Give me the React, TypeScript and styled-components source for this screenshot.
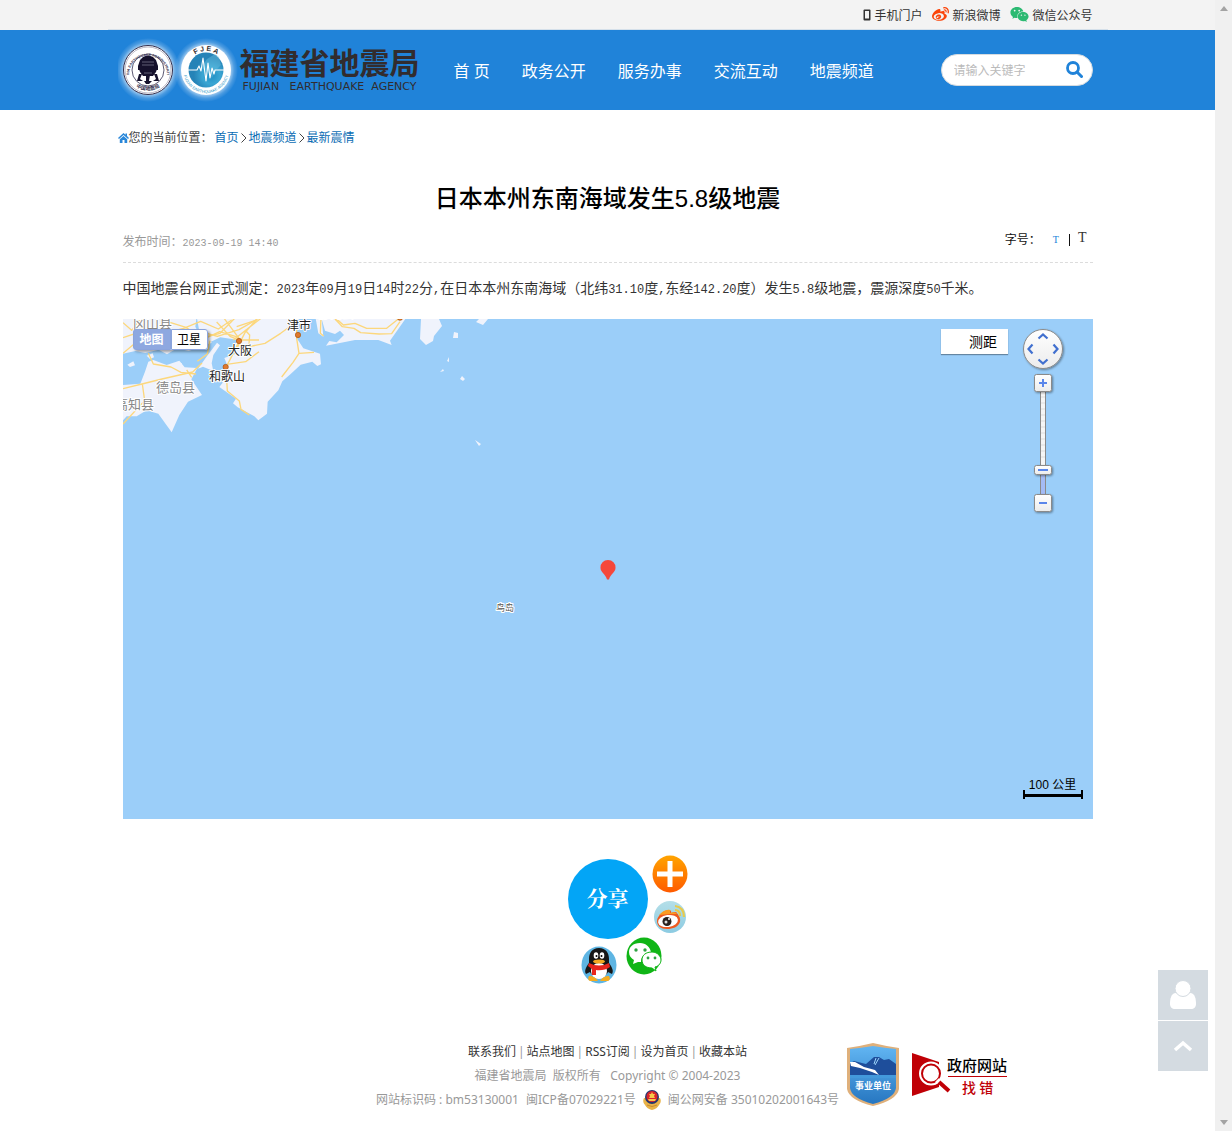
import React from 'react';
import styled, { createGlobalStyle } from 'styled-components';
import { FaWeibo, FaWeixin } from 'react-icons/fa';

const yahei = '"Noto Sans", "Noto Sans CJK SC", sans-serif';
const song = '"Liberation Sans", "Noto Sans CJK SC", sans-serif';
const blue = '#2083d9';

const GlobalStyle = createGlobalStyle`
  * { box-sizing: border-box; }
  body { margin: 0; background: #fff; color: #333; font: 12px/24px ${song}; }
  a { color: inherit; text-decoration: none; }
  button { padding: 0; border: 0; background: none; color: inherit; font: inherit; cursor: pointer; }
  h1, p { margin: 0; }
  svg { display: block; }
`;

const Window = styled.div`
  display: grid;
  grid-template-columns: minmax(0, 1fr) 17px;
  min-height: 100vh;
`;
const Rail = styled.div`
  display: flex;
  flex-direction: column;
  justify-content: space-between;
  align-items: center;
  padding: 6px 0;
  background: #f0f0f0;
`;
const Container = styled.div`
  max-width: 1000px;
  margin: 0 auto;
`;

const TopBar = styled.div`
  background: #f3f3f3;
`;
const TopLinks = styled(Container)`
  display: flex;
  justify-content: flex-end;
  gap: 10px;
  height: 30px;
  padding: 2px 15px 0;
  border-bottom: 1px solid #d5e0ea;
  font-family: ${yahei};
`;
const TopLink = styled.a`
  display: flex;
  align-items: center;
  gap: 3px;
  svg { margin-bottom: 2px; }
`;

const Header = styled.header`
  background: ${blue};
`;
const HeaderInner = styled(Container)`
  display: flex;
  align-items: center;
  height: 80px;
  padding: 0 15px 0 10px;
`;
const Logo = styled.a`
  display: flex;
  align-items: center;
  color: #322c2e;
`;
const LogoName = styled.span`
  display: block;
  margin-bottom: 2px;
  font: 700 30px/32px "Noto Sans CJK SC", sans-serif;
`;
const LogoLatin = styled.span`
  display: block;
  padding-left: 3px;
  font: 11px/16px "DejaVu Sans", sans-serif;
  white-space: pre;
`;
const Nav = styled.nav`
  display: flex;
  margin-left: 18px;
  padding-top: 2px;
  font: 400 16px/24px "Open Sans", "Noto Sans CJK SC", sans-serif;
  color: #fff;
  a { padding: 0 16px; white-space: nowrap; }
`;
const Search = styled.form`
  display: flex;
  align-items: center;
  width: 152px;
  height: 32px;
  margin-left: auto;
  padding: 0 9px 0 12px;
  border: 1px solid #d5dbe0;
  border-radius: 16px;
  background: #fff;
`;
const SearchInput = styled.input`
  flex: 1;
  min-width: 0;
  padding: 2px 0 0;
  border: 0;
  outline: 0;
  background: none;
  font: 12px/20px ${song};
  &::placeholder { color: #bbb; opacity: 1; }
`;

const Breadcrumb = styled.nav`
  display: flex;
  align-items: center;
  height: 54px;
  padding: 2px 0 0 10px;
  color: #444;
  a { color: #0a6cb4; }
`;
const Here = styled.span`
  margin-right: 2px;
`;
const Crumb = styled.span`
  display: flex;
  align-items: center;
`;
const Chevron = styled.svg`
  margin: 0 2px;
`;

const Article = styled.article`
  padding: 16px 15px 0;
`;
const Title = styled.h1`
  padding-top: 2px;
  text-align: center;
  font: 500 24px/34px "Liberation Sans", "Noto Sans CJK SC", sans-serif;
  color: #000;
`;
const Meta = styled.div`
  display: flex;
  justify-content: space-between;
  align-items: center;
  height: 33px;
  margin-top: 14px;
  padding-bottom: 6px;
  border-bottom: 1px dashed #dcdcdc;
  color: #999;
`;
const Stamp = styled.time`
  font: 10px/24px "Liberation Mono", monospace;
`;
const SizePicker = styled.div`
  display: flex;
  align-items: center;
  align-self: flex-start;
  height: 20px;
  padding-right: 6px;
  color: #111;
`;
const SizeButton = styled.button<{ $large?: boolean; $active?: boolean }>`
  margin: ${p => (p.$large ? '0 0 4px 8px' : '0 10px 0 12px')};
  color: ${p => (p.$active ? blue : '#333')};
  font: ${p => (p.$large ? '14px' : '10px')}/16px "Liberation Serif", serif;
`;
const Divider = styled.span`
  width: 1px;
  height: 12px;
  background: #111;
`;
const Body = styled.p`
  margin-top: 11px;
  font-size: 14px;
  line-height: 28px;
`;
const Num = styled.span`
  font: 12px/24px "Liberation Mono", monospace;
`;

const MapBox = styled.section`
  position: relative;
  height: 500px;
  margin-top: 17px;
  overflow: hidden;
  background: #9bcef9;
  color: #000;
`;
const MapArt = styled.svg`
  width: 100%;
  height: 100%;
`;
const MapTypes = styled.div`
  position: absolute;
  top: 10px;
  left: 10px;
  display: flex;
  border-radius: 3px;
  box-shadow: 2px 2px 3px rgba(0, 0, 0, 0.35);
`;
const MapType = styled.button<{ $active?: boolean }>`
  width: ${p => (p.$active ? 38 : 37)}px;
  height: 21px;
  border: 1px solid #8ba4dc;
  border-radius: ${p => (p.$active ? '3px 0 0 3px' : '0 3px 3px 0')};
  background: ${p => (p.$active ? '#8ea8e0' : '#fff')};
  color: ${p => (p.$active ? '#fff' : '#000')};
  font: ${p => (p.$active ? 700 : 400)} 12px/18px ${song};
`;
const Measure = styled.button`
  position: absolute;
  top: 10px;
  right: 85px;
  width: 67px;
  height: 25px;
  padding: 0 10px 0 28px;
  background: #fff;
  box-shadow: 0 1px 1px rgba(0, 0, 0, 0.35);
  font: 14px/24px ${song};
  white-space: nowrap;
`;
const Controls = styled.div`
  position: absolute;
  top: 8px;
  right: 27px;
`;
const Pin = styled.svg`
  position: absolute;
  top: 50%;
  left: 50%;
  margin: -9px 0 0 -8px;
`;
const Scale = styled.div`
  position: absolute;
  right: 10px;
  bottom: 20px;
  width: 60px;
  text-align: center;
  line-height: 14px;
`;
const ScaleBar = styled.div`
  height: 9px;
  margin-top: -2px;
  border: solid #000;
  border-width: 0 2px;
  background: linear-gradient(#000, #000) 0 4px / 100% 3px no-repeat;
`;

const ShareMenu = styled.div`
  position: relative;
  width: 80px;
  height: 130px;
  margin: 40px auto 51px;
`;
const ShareMain = styled.button`
  width: 80px;
  height: 80px;
  border-radius: 50%;
  background: #03a5f6;
  color: #fff;
  font: 700 21px/80px "Liberation Serif", "Noto Serif CJK SC", "Noto Sans CJK SC", serif;
`;
const ShareItem = styled.button<{ $x: number; $y: number }>`
  position: absolute;
  left: ${p => p.$x}px;
  top: ${p => p.$y}px;
`;

const Footer = styled.footer`
  display: grid;
  grid-template-columns: minmax(0, 1fr) auto minmax(0, 1fr);
  padding-bottom: 19px;
  font-family: ${yahei};
  color: #999;
`;
const FooterText = styled.div`
  grid-column: 2;
  text-align: center;
`;
const FooterLine = styled.div`
  display: flex;
  justify-content: center;
  align-items: center;
  height: 24px;
  gap: 2px;
  white-space: pre;
  a { color: #333; }
`;
const Record = styled(FooterLine)`
  gap: 7px;
  a { color: inherit; }
`;
const Badges = styled.div`
  display: flex;
  align-items: flex-start;
  gap: 12px;
  padding: 3px 0 0 8px;
`;
const FloatBar = styled.div`
  position: fixed;
  right: 24px;
  bottom: 60px;
  display: grid;
  gap: 1px;
`;
const FloatButton = styled.button`
  display: grid;
  place-items: center;
  width: 50px;
  height: 50px;
  background: #d4dbe1;
`;

const Seals = () => (
  <svg width="122" height="70" viewBox="118 35 122 70" aria-hidden="true">
    <defs>
      <radialGradient id="glow"><stop offset=".76" stopColor="#fff" stopOpacity=".6" /><stop offset=".88" stopColor="#fff" stopOpacity=".2" /><stop offset="1" stopColor="#fff" stopOpacity="0" /></radialGradient>
      <radialGradient id="globe" cx=".65" cy=".65"><stop stopColor="#1f8dc3" /><stop offset=".5" stopColor="#3ba6d3" /><stop offset="1" stopColor="#2583b7" /></radialGradient>
      <path id="arcTop" d="M129 75a19 19 0 1 1 38 0" />
      <path id="arcLow" d="M127 75a22 22 0 0 0 42 0" />
      <path id="fjTop" d="M187 70a19 19 0 0 1 38 0" />
      <path id="fjLow" d="M183 70a23 23 0 0 0 46 0" />
    </defs>
    <circle cx="148" cy="70" r="32" fill="url(#glow)" />
    <circle cx="206" cy="70" r="32" fill="url(#glow)" />
    <circle cx="148" cy="70" r="24.5" fill="#fff" stroke="#34304f" strokeWidth="1" />
    <circle cx="148" cy="70" r="23" fill="none" stroke="#77738c" strokeWidth=".5" />
    <circle cx="148" cy="70" r="16" fill="none" stroke="#34304f" strokeWidth=".8" />
    <g fill="#15112c">
      <path d="M143 57q5-3 10 0l3 3 2 6-2 6-3 4h-10l-3-4-2-6 2-6z" />
      <path d="M138 66h20v4h-20zM142 74l-2 5 3 2h-6l2-7zM154 74l2 5-3 2h6l-2-7zM146 75h4l-1 6h3l-3 3h-3l-2-3h2z" />
    </g>
    <path d="M142 62h12M142 65h12M144 73h8" stroke="#9593a8" strokeWidth=".6" />
    <text fontFamily="Liberation Sans" fontSize="3.6" fontWeight="700" fill="#34304f"><textPath href="#arcTop" startOffset="50%" textAnchor="middle">CHINA EARTHQUAKE ADMINISTRATION</textPath></text>
    <text fontFamily="Noto Sans CJK SC" fontSize="5" fontWeight="700" fill="#34304f"><textPath href="#arcLow" startOffset="50%" textAnchor="middle">中国地震局</textPath></text>
    <circle cx="206" cy="70" r="25" fill="#fff" />
    <circle cx="206" cy="70" r="17.5" fill="url(#globe)" />
    <path d="M207 59l8-5 4 3 2 8-5 5-4 8-5-7-6-3z" fill="#65bddd" opacity=".45" />
    <path d="M188 70h9l2-4 2 5 2-13 3 23 2-18 2 15 2-10 2 6 1-4h9" fill="none" stroke="#fff" strokeWidth="1.1" strokeLinejoin="round" />
    <text fontFamily="Liberation Sans" fontSize="7" fontWeight="700" fill="#322c2e"><textPath href="#fjTop" startOffset="50%" textAnchor="middle">F J E A</textPath></text>
    <text fontFamily="Liberation Sans" fontSize="4" fill="#2492c5"><textPath href="#fjLow" startOffset="50%" textAnchor="middle">FUJIAN EARTHQUAKE AGENCY</textPath></text>
  </svg>
);

const places: [string, number, number, number, string][] = [
  ['冈山县', 10, 9, 13, '#888'],
  ['德岛县', 33, 73, 13, '#888'],
  ['高知县', -8, 90, 13, '#888'],
  ['津市', 164, 11, 12, '#222'],
  ['大阪', 105, 36, 12, '#222'],
  ['和歌山', 86, 62, 12, '#222'],
  ['静冈县', 195, -1, 12, '#888'],
  ['鸟岛', 373, 292, 9, '#555'],
];

const towns = [[357, 93], [317, 171], [534, 75], [840, 23]];

/* The coast is traced on a grid three times finer than the map's own. */
const MapDrawing = () => (
  <MapArt role="img" aria-label="震中位置地图">
    <g transform="translate(-3 -9) scale(.33333)">
      <g fill="#f0f3fc">
        <path d="M0 20h230l-4 30 10 20 40 28-70 25-35-8-30 18-25-14-40 10-30-6-46 10z" />
        <path d="M9 225l52-4 14-36 10-30 15-5 40 15 38-13 16 20 38 2-18 34 32 47-42 20-26 40-23 52-40-56-35-10-30 18-30 0-11 12z" />
        <path d="M234 176l25-35 32-43 9 8-20 29-5 25 5 23-31-13z" />
        <path d="M230 20h308l-12 38 4 26 20 31 50 16 3 32-11 5-15-13-35 9-30 28-25 22-12 27-32 34-2 36-26 20-12-12-50-27-14-12 9-14-50-35 10-13-5-18 20-31-10-25 32-12-3-27 13-15-54-8-36 17-25-24z" />
        <path d="M586 20h270v7l-46 65 5 13-40-15h-70l-87 17 10-14 22 4 22-22-12-13-15 10-30-10-10-35 5 53-15-10z" />
        <path d="M22 164l18-10 5 12-15 5zM80 137l18-7 4 12-12 5zM176 157l10 3-4 5z" />
      </g>
      <g fill="none" stroke="#fcd77c" strokeWidth="4" strokeLinejoin="round">
        <path d="M9 83l60-20 40 13 90-23 50 35 50-23 57 17M9 38l26 23 26-33M140 34l58 18 44-18 53 23 40-27M232 62l60 17 65-20 56-32M290 36l40 43 37 15M9 130l36-30M270 92l-8 40-30 22" />
        <path d="M9 236l57-14 60-15 92-21 28-27M67 222l7 50-65 70M85 130l15 32 53 9 30 16 45 5M200 180l15 22" />
        <path d="M530 20v65l7 45 45-3M537 130l-18 27-34 44M260 80l40-10 47-48M310 22l50 67-30 60-12 22 4 72 36 30 5 25 25 17M320 163l57-8 40-30M340 90l84-66M360 110h27l48-10 47-30 48-35M375 60l14 15-3 40M360 90h57M410 28l-35 40-26 50M350 50l60-20" />
        <path d="M603 20l-2 50 10 8M650 27l20 18 35-5 35 15 60 0 35-28M645 27l22 23 35 5 20 13 55 4 38-1 25-36" />
      </g>
      <g fill="#df782c" stroke="#a6540f" strokeWidth="2">
        {towns.map(([x, y]) => <circle key={x} cx={x} cy={y} r="8" />)}
      </g>
    </g>
    <g fill="#f0f3fc">
      <path d="M298 0h18l3 7-8 10-1 5-7 4-6-6zM331 13l4 1v5h-5zM356 0h9l-5 6-7-3zM326 38v5l-2-1zM320 50l1 2-4 1zM339 57l3 3-2 2-3-2zM352 121l6 4-2 2z" />
    </g>
    <g fontFamily="Noto Sans CJK SC" stroke="#fff" strokeWidth="2" paintOrder="stroke" strokeLinejoin="round">
      {places.map(([name, x, y, size, fill]) => (
        <text key={name} x={x} y={y} fontSize={size} fill={fill}>{name}</text>
      ))}
    </g>
  </MapArt>
);

const ZoomControl = () => (
  <svg width="46" height="192" viewBox="0 0 46 192" aria-label="缩放控件" role="img">
    <defs>
      <linearGradient id="knob" x1="0" y1="0" x2="0" y2="1"><stop stopColor="#fff" /><stop offset="1" stopColor="#ececec" /></linearGradient>
      <filter id="drop" x="-20%" y="-20%" width="150%" height="150%"><feDropShadow dx="1" dy="1" stdDeviation="1" floodOpacity=".4" /></filter>
    </defs>
    <g stroke="#8a8a8a" fill="url(#knob)">
      <circle cx="23" cy="22" r="19.5" filter="url(#drop)" />
      <path d="M20.5 60h5v110h-5z" fill="#f5f5f5" />
      <path d="M20.5 145h5v25h-5z" fill="#a4bbf5" />
      <path d="M21 70h4m-4 6h4m-4 6h4m-4 6h4m-4 6h4m-4 6h4m-4 6h4m-4 6h4m-4 6h4m-4 6h4m-4 6h4" stroke="#ddd" />
      <rect x="14.5" y="47.5" width="17" height="17" rx="2" filter="url(#drop)" />
      <rect x="14.5" y="138.5" width="17" height="9" rx="2" filter="url(#drop)" />
      <rect x="14.5" y="167.5" width="17" height="17" rx="2" filter="url(#drop)" />
    </g>
    <path d="M18.5 11.5l4.5-4 4.5 4M18.5 32.500l4.5 4 4.5-4M12.500 17.500l-4 4.500 4 4.500M33.500 17.500l4 4.500-4 4.500" fill="none" stroke="#4170cf" strokeWidth="2.2" />
    <path d="M19 56h8M23 52v8M18 143h10M19 176h8" stroke="#5a86ea" strokeWidth="2" />
  </svg>
);

const PlusIcon = () => (
  <svg width="36" height="38" viewBox="0 0 36 38">
    <defs><linearGradient id="orange" x1="0" y1="0" x2="0" y2="1"><stop stopColor="#ffa400" /><stop offset="1" stopColor="#ff5a00" /></linearGradient></defs>
    <ellipse cx="18" cy="19" rx="17.5" ry="18.5" fill="url(#orange)" />
    <path d="M18 6v26M5 19h26" stroke="#fff" strokeWidth="5" />
  </svg>
);
const WeiboIcon = () => (
  <svg width="32" height="32" viewBox="0 0 32 32">
    <defs><linearGradient id="sky" x1="0" y1="0" x2="0" y2="1"><stop stopColor="#b5dfe8" /><stop offset="1" stopColor="#8ccbe2" /></linearGradient></defs>
    <circle cx="16" cy="16" r="16" fill="url(#sky)" />
    <path d="M3 20c0-5 7-11 12-11 3 0 2 3 2 3s5-2 6 0 4 4 3 9c-2 5-7 7-13 7S3 25 3 20z" fill="#ee5a20" />
    <path d="M5 14c3-3 7-6 11-5v3q6-2 7 1l-7 0z" fill="#fb9c22" />
    <ellipse cx="14" cy="20" rx="10" ry="6" fill="#fff" transform="rotate(-8 14 20)" />
    <circle cx="13" cy="20.5" r="4.5" fill="#29211f" /><circle cx="12" cy="21" r="1.5" fill="#ddd" /><circle cx="15" cy="18" r="1" fill="#fff" />
    <path d="M21 9q5 0 5 6M21 5q9 1 9 11" fill="none" stroke="#e8ca4c" strokeWidth="2.2" />
  </svg>
);
const WechatIcon = () => (
  <svg width="36" height="38" viewBox="0 0 36 38">
    <ellipse cx="18" cy="19" rx="17.5" ry="18.5" fill="#10b516" />
    <path d="M14 6C7 6 3 10 3 15c0 4 2 6 5 8l-1 4 5-2h3c0-6 4-9 10-10-1-5-5-9-11-9z" fill="#fff" />
    <path d="M26 15c-6 0-10 3-10 8s4 8 10 8l4 3-1-4c4-1 6-4 6-7s-3-8-9-8z" fill="#fff" stroke="#10b516" strokeWidth="1" />
    <g fill="#2fa342"><circle cx="10" cy="13" r="1.7" /><circle cx="19" cy="13" r="1.7" /><circle cx="22" cy="21" r="1.4" /><circle cx="29" cy="21" r="1.4" /></g>
  </svg>
);
const QQIcon = () => (
  <svg width="36" height="38" viewBox="0 0 36 38">
    <ellipse cx="18" cy="19" rx="17.5" ry="18.5" fill="#5eb5e3" />
    <path d="M18 2c-7 0-10 5-10 11v4c-3 4-5 8-3 11l4-2c2 6 16 6 18 0l4 2c2-3 0-7-3-11v-4c0-6-3-11-10-11z" fill="#171717" />
    <ellipse cx="18" cy="25" rx="8" ry="8" fill="#fff" />
    <path d="M8 30q-2 4 1 5h8q-3-5-9-5zM28 30q2 4-1 5h-8q3-5 9-5z" fill="#f4ac20" />
    <path d="M8 17q10 5 20 0l1 4q-6 4-14 3v5h-4v-6l-4-3z" fill="#e7251d" />
    <ellipse cx="15" cy="9.5" rx="2.3" ry="3.3" fill="#fff" /><ellipse cx="21" cy="9.5" rx="2.3" ry="3.3" fill="#fff" />
    <circle cx="15.5" cy="10" r="1" /><circle cx="20.5" cy="10" r="1" />
    <ellipse cx="18" cy="15.5" rx="6" ry="2" fill="#f5a821" />
  </svg>
);

const PoliceIcon = () => (
  <svg width="18" height="20" viewBox="0 0 18 20" aria-hidden="true">
    <path d="M1 8q-2 4 1 7 2 4 7 5 5-1 7-5 3-3 1-7z" fill="#e9b348" />
    <circle cx="9" cy="7" r="7" fill="#27376d" /><circle cx="9" cy="6.5" r="5.5" fill="#d9242b" />
    <path d="M9 2l1 2 2 0-1 2 1 2H6l1-2-1-2 2 0zM5 9h8l-1 2H6z" fill="#f6c84a" />
    <path d="M4 15q5 3 10 0" fill="none" stroke="#c88a30" />
  </svg>
);

const UnitBadge = () => (
  <svg width="52" height="64" viewBox="0 0 52 64" aria-label="事业单位" role="img">
    <defs>
      <linearGradient id="shield" x1="0" y1="0" x2="0" y2="1"><stop stopColor="#65b9f5" /><stop offset="1" stopColor="#2373be" /></linearGradient>
      <clipPath id="inner"><path d="M3 6Q14 5 26 3q12 2 23 3v39q-1 10-23 16Q4 55 3 45z" /></clipPath>
    </defs>
    <path d="M0 5Q14 3 26 0q12 3 26 5v41q-2 11-26 17Q2 57 0 46z" fill="#dfb07b" />
    <g clipPath="url(#inner)">
      <path d="M0 0h52v64H0z" fill="url(#shield)" />
      <path d="M0 22l7-4 12 3 8-7h5l5 3 5-1 10 7v9H0z" fill="#1e4e9b" />
      <path d="M0 32h52v3H0z" fill="#4399dc" />
      <path d="M3 19l5 0 9 5 11 3 4 5-7-3-12-4-9-2z" fill="#fff" />
      <path d="M27 21l2-6M32 15l-4 7" stroke="#9dd4fa" />
    </g>
    <text x="26" y="46" textAnchor="middle" fontFamily="Noto Sans CJK SC" fontSize="9" fontWeight="700" fill="#fff">事业单位</text>
  </svg>
);
const FindErrorBadge = () => (
  <svg width="99" height="60" viewBox="0 0 99 60" aria-label="政府网站找错" role="img">
    <path d="M1 10l27 9v25L1 53z" fill="#c00006" />
    <circle cx="20" cy="30.5" r="9.5" fill="#c00006" stroke="#fff" strokeWidth="5" />
    <circle cx="20" cy="30.5" r="9" fill="#fff" stroke="#c00006" strokeWidth="2" />
    <path d="M26 37l2 2" stroke="#fff" strokeWidth="5" />
    <path d="M28 39l10 9" stroke="#c00006" strokeWidth="4" />
    <path d="M37 33.500h59" stroke="#c00006" />
    <g fontFamily="Noto Sans CJK SC" fontWeight="500">
      <text x="36" y="28" fontSize="15" fill="#000">政府网站</text>
      <text x="51" y="50" fontSize="14" fill="#c00006">找 错</text>
    </g>
  </svg>
);

const navItems = ['首 页', '政务公开', '服务办事', '交流互动', '地震频道'];
const crumbs = ['首页', '地震频道', '最新震情'];
const footerLinks = ['联系我们', '站点地图', 'RSS订阅', '设为首页', '收藏本站'];

export default function App() {
  return (
    <Window>
      <GlobalStyle />
      <div>
        <TopBar>
          <TopLinks>
            <TopLink href="#">
              <svg width="8" height="12" viewBox="0 0 8 12"><path d="M.5 1.5q0-1 1-1h5q1 0 1 1v9q0 1-1 1h-5q-1 0-1-1z" fill="#333" /><path d="M2 2h4v7.500H2z" fill="#f3f3f3" /></svg>
              手机门户
            </TopLink>
            <TopLink href="#"><FaWeibo size={17} color="#fb4409" />新浪微博</TopLink>
            <TopLink href="#"><FaWeixin size={19} color="#2cba72" />微信公众号</TopLink>
          </TopLinks>
        </TopBar>
        <Header>
          <HeaderInner>
            <Logo href="#">
              <Seals />
              <span>
                <LogoName>福建省地震局</LogoName>
                <LogoLatin>{'FUJIAN   EARTHQUAKE  AGENCY'}</LogoLatin>
              </span>
            </Logo>
            <Nav>{navItems.map(n => <a key={n} href="#">{n}</a>)}</Nav>
            <Search>
              <SearchInput aria-label="搜索" placeholder="请输入关键字" />
              <button type="button" aria-label="搜索">
                <svg width="17" height="19" viewBox="0 0 17 19"><circle cx="7" cy="7" r="5.5" fill="none" stroke={blue} strokeWidth="2.8" /><path d="M11 11l4.500 4.500" stroke={blue} strokeWidth="3" strokeLinecap="round" /></svg>
              </button>
            </Search>
          </HeaderInner>
        </Header>
        <Container>
          <Breadcrumb>
            <svg width="11" height="10" viewBox="0 0 11 10"><path d="M5.500 0L0 5l1 1 4.500-4L10 6l1-1-2-2V.5H7.500v1.300zM5.500 3L1.800 6.200V10h2.700V7h2v3h2.700V6.200z" fill="#2a87d9" /></svg>
            <Here>您的当前位置：</Here>
            {crumbs.map((c, i) => (
              <Crumb key={c}>
                {i > 0 && <Chevron width="6" height="10" viewBox="0 0 6 10"><path d="M.5 .5L5 5 .5 9.500" fill="none" stroke="#444" /></Chevron>}
                <a href="#">{c}</a>
              </Crumb>
            ))}
          </Breadcrumb>
          <Article>
            <Title>日本本州东南海域发生5.8级地震</Title>
            <Meta>
              <span>发布时间：<Stamp>2023-09-19 14:40</Stamp></span>
              <SizePicker>
                字号：
                <SizeButton $active aria-label="小字号">T</SizeButton>
                <Divider />
                <SizeButton $large aria-label="大字号">T</SizeButton>
              </SizePicker>
            </Meta>
            <Body>
              中国地震台网正式测定：<Num>2023</Num>年<Num>09</Num>月<Num>19</Num>日<Num>14</Num>时<Num>22</Num>分<Num>,</Num>在日本本州东南海域（北纬<Num>31.10</Num>度<Num>,</Num>东经<Num>142.20</Num>度）发生<Num>5.8</Num>级地震，震源深度<Num>50</Num>千米。
            </Body>
            <MapBox>
              <MapDrawing />
              <MapTypes>
                <MapType $active>地图</MapType>
                <MapType>卫星</MapType>
              </MapTypes>
              <Measure>测距</Measure>
              <Controls><ZoomControl /></Controls>
              <Pin width="16" height="20" viewBox="0 0 16 20"><path d="M8 0a7.500 7.500 0 0 0-7.500 8c0 4 5 6 6.500 11.500h2C10.500 14 15.500 12 15.500 8A7.500 7.500 0 0 0 8 0z" fill="#f5473b" /></Pin>
              <Scale>100 公里<ScaleBar /></Scale>
            </MapBox>
          </Article>
          <ShareMenu>
            <ShareMain>分享</ShareMain>
            <ShareItem $x={84} $y={-4} aria-label="更多"><PlusIcon /></ShareItem>
            <ShareItem $x={86} $y={42} aria-label="微博"><WeiboIcon /></ShareItem>
            <ShareItem $x={58} $y={78} aria-label="微信"><WechatIcon /></ShareItem>
            <ShareItem $x={13} $y={87} aria-label="QQ"><QQIcon /></ShareItem>
          </ShareMenu>
        </Container>
        <Footer>
          <FooterText>
            <FooterLine>
              {footerLinks.map((l, i) => (
                <React.Fragment key={l}>{i > 0 && <span>|</span>}<a href="#">{l}</a></React.Fragment>
              ))}
            </FooterLine>
            <FooterLine>{'福建省地震局  版权所有   Copyright © 2004-2023'}</FooterLine>
            <Record>
              <span>{'网站标识码 : bm53130001'}</span>
              <a href="#">闽ICP备07029221号</a>
              <PoliceIcon />
              <a href="#">闽公网安备 35010202001643号</a>
            </Record>
          </FooterText>
          <Badges>
            <a href="#"><UnitBadge /></a>
            <a href="#"><FindErrorBadge /></a>
          </Badges>
        </Footer>
      </div>
      <Rail aria-hidden="true">
        <svg width="8" height="5" viewBox="0 0 8 5"><path d="M0 5l4-5 4 5z" fill="#a3a3a3" /></svg>
        <svg width="8" height="5" viewBox="0 0 8 5"><path d="M0 0h8L4 5z" fill="#a3a3a3" /></svg>
      </Rail>
      <FloatBar>
        <FloatButton aria-label="个人中心">
          <svg width="28" height="30" viewBox="0 0 28 30"><path d="M7 13c-5 0-6 6-6 11 0 3 2 5 5 5h16c3 0 5-2 5-5 0-5-1-11-6-11z" fill="#fff" /><circle cx="14" cy="8.5" r="8" fill="#fff" stroke="#d4dbe1" /></svg>
        </FloatButton>
        <FloatButton aria-label="返回顶部">
          <svg width="20" height="12" viewBox="0 0 20 12"><path d="M2 10l8-7 8 7" fill="none" stroke="#fff" strokeWidth="3.5" /></svg>
        </FloatButton>
      </FloatBar>
    </Window>
  );
}
